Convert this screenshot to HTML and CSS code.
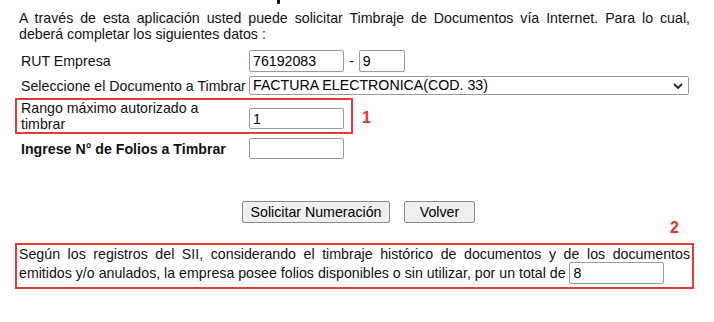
FILE: index.html
```html
<!DOCTYPE html>
<html lang="es">
<head>
<meta charset="utf-8">
<title>Timbraje de Documentos</title>
<link rel="stylesheet" href="styles.css">
</head>
<body>
<div class="page">
  <div class="cut"><span class="cut-mark"></span></div>
  <p class="intro">A través de esta aplicación usted puede solicitar Timbraje de Documentos vía Internet. Para lo cual, deberá completar los siguientes datos :</p>

  <div class="row row-rut">
    <span class="label">RUT Empresa</span>
    <input class="field field-rut" type="text" value="76192083">
    <span class="dash">-</span>
    <input class="field field-dv" type="text" value="9">
  </div>

  <div class="row row-doc">
    <span class="label">Seleccione el Documento a Timbrar</span>
    <div class="select-wrap">
      <select class="select">
        <option>FACTURA ELECTRONICA(COD. 33)</option>
      </select>
      <svg class="chev" width="10" height="6" viewBox="0 0 10 6"><path d="M1 1 L5 5 L9 1" fill="none" stroke="#222" stroke-width="1.8"/></svg>
    </div>
  </div>

  <div class="row row-mark">
    <div class="mark mark-one">
      <span class="label label-narrow">Rango máximo autorizado a timbrar</span>
      <input class="field" type="text" value="1">
    </div>
    <span class="num num-one">1</span>
  </div>

  <div class="row row-folios">
    <span class="label label-bold">Ingrese N° de Folios a Timbrar</span>
    <input class="field" type="text" value="">
  </div>

  <div class="actions">
    <button class="btn btn-solicitar" type="button">Solicitar Numeración</button>
    <button class="btn btn-volver" type="button">Volver</button>
  </div>

  <div class="num num-two">2</div>

  <div class="mark mark-two">
    <p class="note">Según los registros del SII, considerando el timbraje histórico de documentos y de los documentos emitidos y/o anulados, la empresa posee folios disponibles o sin utilizar, por un total de <input class="field field-total" type="text" value="8"></p>
  </div>
</div>
</body>
</html>
```

FILE: styles.css
```css
* { box-sizing: border-box; }

html, body {
  margin: 0;
  padding: 0;
  background: #fff;
}

body {
  font-family: "Liberation Sans", Arial, sans-serif;
  font-size: 14.2px;
  color: #111;
}

.page {
  width: 714px;
  padding: 0 24px 0 19px;
}

.cut {
  height: 4px;
  padding-left: 258px;
}

.cut-mark {
  display: block;
  width: 3px;
  height: 4px;
  background: #111;
  border-radius: 0 0 1px 1px;
}

.intro {
  margin: 6px 0 0 0;
  width: 671px;
  text-align: justify;
  line-height: 16px;
}

.row {
  display: flex;
  align-items: center;
  padding-left: 2px;
}

.row-rut { margin-top: 8px; height: 22px; }
.row-doc { margin-top: 4px; height: 19px; }
.row-mark { margin-top: 3px; padding-left: 0; margin-left: -4px; }
.row-folios { margin-top: 4px; height: 21px; }

.label {
  width: 228px;
  flex: none;
  line-height: 16px;
}

.label-narrow {
  width: 228px;
  padding-right: 30px;
}

.label-bold { font-weight: bold; }

.field {
  width: 95px;
  height: 22px;
  border: 1px solid #9a9a9a;
  border-radius: 2px;
  padding: 0 3px;
  font-family: "Liberation Sans", Arial, sans-serif;
  font-size: 14.2px;
  color: #000;
  background: #fff;
  margin: 0;
}

.row-folios .field, .mark-one .field { height: 21px; }

.dash {
  margin: 0 5px;
}

.field-dv { width: 46px; }

.select-wrap {
  position: relative;
  width: 440px;
  height: 19px;
}

.select {
  -webkit-appearance: none;
  appearance: none;
  width: 100%;
  height: 19px;
  border: 1px solid #9a9a9a;
  border-radius: 2px;
  padding: 0 20px 0 3px;
  font-family: "Liberation Sans", Arial, sans-serif;
  font-size: 14.2px;
  line-height: 17px;
  color: #000;
  background: #fff;
  margin: 0;
}

.chev {
  position: absolute;
  right: 6px;
  top: 7px;
  pointer-events: none;
}

.mark {
  border: 2px solid #e63a36;
}

.mark-one {
  display: flex;
  align-items: center;
  width: 338px;
  height: 36px;
  padding: 0 0 0 4px;
}

.mark-one .field { margin-top: 5px; }

.num {
  color: #e8302a;
  font-weight: bold;
  font-size: 16px;
  line-height: 18px;
}

.num-one {
  margin-left: 9px;
  margin-top: 3px;
}

.actions {
  display: flex;
  gap: 14px;
  padding-left: 223px;
  margin-top: 42px;
}

.btn {
  height: 22px;
  border: 1px solid #8a8a8a;
  border-radius: 2px;
  background: #efefef;
  font-family: "Liberation Sans", Arial, sans-serif;
  font-size: 14.2px;
  color: #000;
  padding: 0;
  margin: 0;
}

.btn-solicitar { width: 148px; }
.btn-volver { width: 71px; }

.num-two {
  margin-top: -4px;
  height: 18px;
  text-align: right;
  width: 660px;
}

.mark-two {
  margin-top: 6px;
  margin-left: -4px;
  width: 679px;
  height: 46px;
  padding: 1px 2px 2px 2px;
}

.note {
  margin: 0;
  text-align: justify;
  line-height: 16px;
}

.field-total {
  vertical-align: baseline;
}
```
